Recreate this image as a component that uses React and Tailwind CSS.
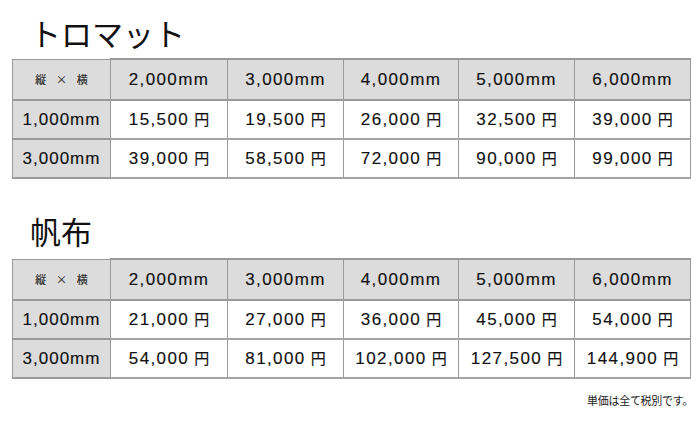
import React from "react";

const cols = ["2,000mm", "3,000mm", "4,000mm", "5,000mm", "6,000mm"];

const tables = [
  {
    title: "トロマット",
    rows: [
      ["1,000mm", ["15,500", "19,500", "26,000", "32,500", "39,000"]],
      ["3,000mm", ["39,000", "58,500", "72,000", "90,000", "99,000"]],
    ],
  },
  {
    title: "帆布",
    rows: [
      ["1,000mm", ["21,000", "27,000", "36,000", "45,000", "54,000"]],
      ["3,000mm", ["54,000", "81,000", "102,000", "127,500", "144,900"]],
    ],
  },
];

const font = { fontFamily: '"Liberation Sans", "Noto Sans CJK JP", sans-serif' };
const jp = { fontFamily: '"Noto Sans CJK JP", sans-serif' };

function PriceTable({ t, first }) {
  return (
    <div>
      <h2
        className={`pl-[18px] text-[31px] leading-[40px] text-[#111] font-normal ${first ? "pt-[13px] pb-[5px]" : "pt-[32px] pb-[7px]"}`}
        style={jp}
      >
        {t.title}
      </h2>
      <table className="border-collapse w-[678px] table-fixed text-[17px] text-[#111] tracking-[1.4px] [-webkit-text-stroke:0.15px_#111]" style={font}>
        <colgroup>
          <col className="w-[98px]" />
          <col className="w-[117px]" />
          <col className="w-[116px]" />
          <col className="w-[115px]" />
          <col className="w-[116px]" />
          <col className="w-[116px]" />
        </colgroup>
        <thead>
          <tr className="h-[41px] bg-[#dcdcdc]">
            <th className="border border-[#9a9a9a] font-normal text-[11px] tracking-normal text-[#333]">
              <span style={jp}>縦&nbsp;&nbsp;&nbsp;&nbsp;×&nbsp;&nbsp;&nbsp;&nbsp;横</span>
            </th>
            {cols.map((c) => (
              <th key={c} className="border-x border-x-[#9a9a9a] border-y-2 border-y-[#9a9a9a] font-normal text-center">
                {c}
              </th>
            ))}
          </tr>
        </thead>
        <tbody>
          {t.rows.map(([h, vals]) => (
            <tr key={h} className="h-[39px]">
              <td className="bg-[#dcdcdc] border-x border-x-[#9a9a9a] border-y-2 border-y-[#9a9a9a] text-center tracking-[1px]">{h}</td>
              {vals.map((v, j) => (
                <td key={j} className="bg-white border-x border-x-[#9a9a9a] border-y-2 border-y-[#a5a5a5] text-center">
                  {v}
                  <span className="tracking-normal text-[15px] ml-[5px]" style={jp}>円</span>
                </td>
              ))}
            </tr>
          ))}
        </tbody>
      </table>
    </div>
  );
}

export default function App() {
  return (
    <div className="w-[700px] h-[427px] bg-white pl-[12px] overflow-hidden">
      {tables.map((t, i) => (
        <PriceTable key={t.title} t={t} first={i === 0} />
      ))}
      <p
        className="w-[681px] text-right text-[11px] text-[#222] mt-[13px] tracking-[-0.3px]"
        style={jp}
      >
        単価は全て税別です。
      </p>
    </div>
  );
}
